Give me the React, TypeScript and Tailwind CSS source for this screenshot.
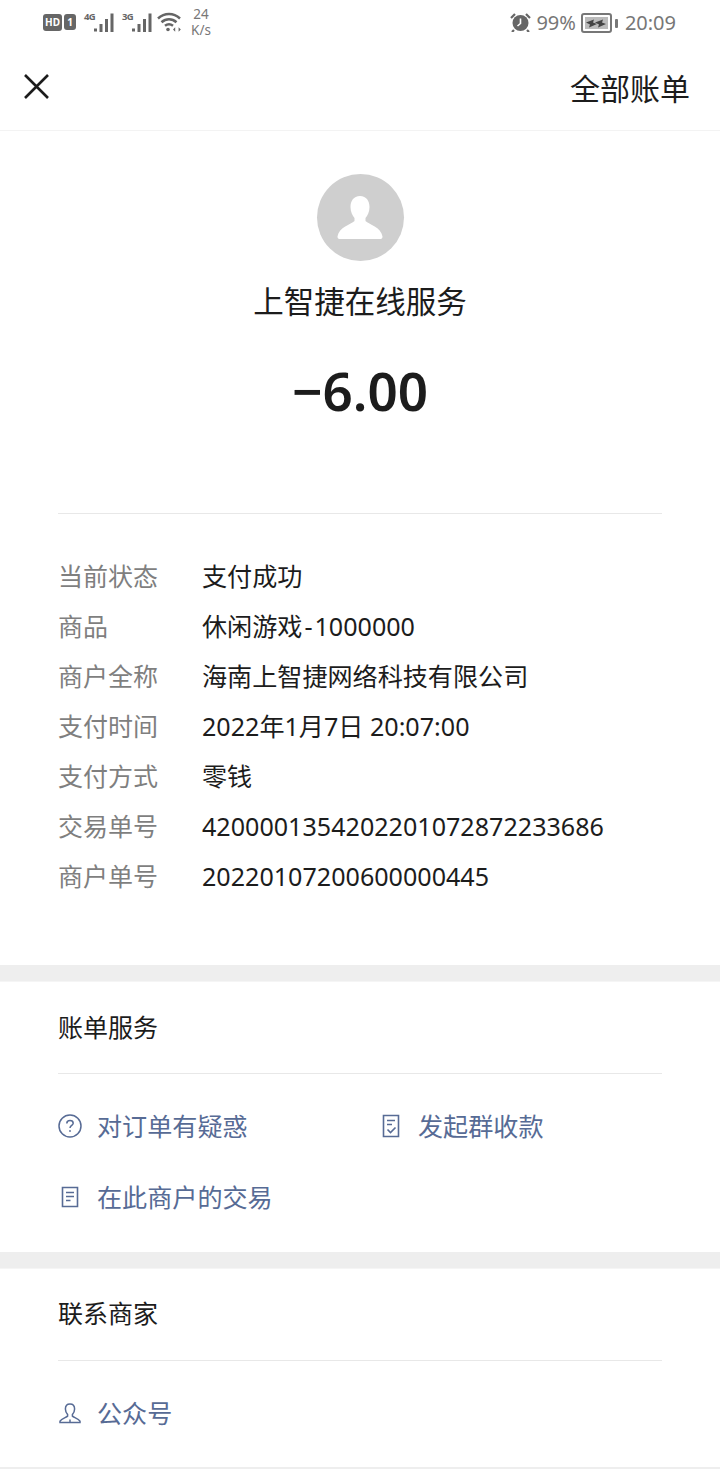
import type { ReactNode } from "react";

const font = { fontFamily: '"Noto Sans", "Noto Sans CJK SC", sans-serif' };

const details: [string, ReactNode][] = [
  ["当前状态", "支付成功"],
  ["商品", <>休闲游戏<span className="mx-[2px]">-</span>1000000</>],
  ["商户全称", "海南上智捷网络科技有限公司"],
  ["支付时间", "2022年1月7日 20:07:00"],
  ["支付方式", "零钱"],
  ["交易单号", "4200001354202201072872233686"],
  ["商户单号", "20220107200600000445"],
];

function Signal({ label }: { label: string }) {
  return (
    <div className="flex items-start w-[30px] h-[19px]">
      <span className="w-[10px] text-[9.5px] leading-[9px] font-bold text-[#666] tracking-[-0.8px] mt-[-1px]">{label}</span>
      <svg width="20" height="19" viewBox="0 0 20 19" fill="#666">
        <rect x="0" y="15.5" width="3" height="3" />
        <rect x="5.5" y="11" width="3" height="8" />
        <rect x="11" y="6" width="3" height="13" />
        <rect x="16.5" y="0.5" width="3" height="18.5" />
      </svg>
    </div>
  );
}

function StatusBar() {
  return (
    <div className="h-[44px] flex items-start justify-between pl-[43px] pr-[44px] pt-[12px] text-[#666]">
      <div className="flex items-center h-[20px]">
        <span className="w-[19px] h-[17px] rounded-[3px] bg-[#666] text-white text-[10px] leading-[17px] font-bold text-center">HD</span>
        <span className="ml-[2px] w-[12px] h-[16px] rounded-[3px] bg-[#666] text-white text-[10px] leading-[16px] font-bold text-center">1</span>
        <div className="ml-[8px] flex items-center gap-[8px]">
          <Signal label="4G" />
          <Signal label="3G" />
        </div>
        <svg className="ml-[5px]" width="24" height="20" viewBox="0 0 24 20" fill="none" stroke="#666" strokeWidth="2.5">
          <path d="M1 6.5C7.5 0.5 16.5 0.5 23 6.5" />
          <path d="M4.5 10.2C9 6.2 15 6.2 19.5 10.2" />
          <path d="M8 13.8C10.5 11.8 13.5 11.8 16 13.8" />
          <circle cx="11" cy="17.5" r="1.8" fill="#666" stroke="none" />
          <path d="M16 17.5l2.2-2.2v4.4zM23.8 17.5l-2.2-2.2v4.4z" fill="#666" stroke="none" />
        </svg>
        <div className="ml-[9px] w-[22px] h-[20px] flex flex-col justify-center items-center text-[13.5px] leading-[16px] text-[#777]">
          <div className="shrink-0">24</div>
          <div className="shrink-0">K/s</div>
        </div>
      </div>
      <div className="flex items-center h-[22px] text-[20px] leading-[20px] text-[#777]">
        <svg width="21" height="19" viewBox="0 0 21 19" className="mt-[-2px]">
          <circle cx="10.5" cy="10" r="8" fill="#666" />
          <path d="M10.5 5.5v5l-3 2.5" fill="none" stroke="#fff" strokeWidth="1.6" />
          <path d="M1 5l4-4M20 5l-4-4M4 17l-2 2M17 17l2 2" stroke="#666" strokeWidth="2.2" />
        </svg>
        <span className="ml-[5px]">99%</span>
        <div className="ml-[5px] w-[31px] h-[20px] rounded-[3px] border-2 border-[#777] p-[2px]">
          <div className="w-full h-full bg-[#bbb] flex items-center justify-center">
            <svg width="22" height="11" viewBox="0 0 22 10" fill="#444">
              <path d="M1 4L9 1 8 4 12 5.5 4 9 5 6z" />
              <path d="M10 4L18 1 17 4 21 5.5 13 9 14 6z" />
            </svg>
          </div>
        </div>
        <div className="ml-[3px] w-[3px] h-[9px] rounded-[1px] bg-[#777]" />
        <span className="ml-[7px]">20:09</span>
      </div>
    </div>
  );
}

function QuestionIcon() {
  return (
    <svg width="24" height="24" viewBox="0 0 24 24" fill="none" stroke="#576b95" strokeWidth="1.5">
      <circle cx="12" cy="12" r="11" />
      <path d="M8.8 9.5C8.8 7.6 10.2 6.6 12 6.6S15.2 7.7 15.2 9.3C15.2 11.3 12 11.6 12 14" />
      <circle cx="12" cy="17" r="0.9" fill="#576b95" stroke="none" />
    </svg>
  );
}

function BillCheckIcon() {
  return (
    <svg width="24" height="24" viewBox="0 0 24 24" fill="none" stroke="#576b95" strokeWidth="1.6">
      <path d="M4.5 1.5H19.5V22.5H4.5Z" />
      <path d="M8 6.5H16M8 10.5H13" />
      <path d="M8.5 15.5L11.5 18.5 16.5 13.5" />
    </svg>
  );
}

function BillIcon() {
  return (
    <svg width="24" height="24" viewBox="0 0 24 24" fill="none" stroke="#576b95" strokeWidth="1.6">
      <path d="M4.5 2.5H19.5V21.5H4.5Z" />
      <path d="M8 7.5H16M8 11.5H16M8 15.5H12.5" />
    </svg>
  );
}

function PersonIcon() {
  return (
    <svg width="24" height="24" viewBox="0 0 24 24" fill="none" stroke="#576b95" strokeWidth="1.5">
      <path d="M12 3C8.8 3 7.4 5.5 7.4 8C7.4 10.8 8.6 12.4 9.6 13.6V15.2C8 16.5 3.4 17.8 2 20.2V21.6H22V20.2C20.6 17.8 16 16.5 14.4 15.2V13.6C15.4 12.4 16.6 10.8 16.6 8C16.6 5.5 15.2 3 12 3Z" />
      <path d="M12 18.5V21.6" />
    </svg>
  );
}

function LinkItem({ icon, text, className }: { icon: ReactNode; text: string; className?: string }) {
  return (
    <div className={`flex items-center gap-[15px] h-[36px] ${className ?? ""}`}>
      {icon}
      <span className="text-[25.1px] leading-[36px] text-[#576b95]">{text}</span>
    </div>
  );
}

export default function App() {
  return (
    <div className="w-[720px] h-[1469px] bg-white overflow-hidden" style={font}>
      <StatusBar />

      <div className="h-[87px] flex items-center justify-between pl-[23px] pr-[30px] border-b border-[#f3f3f3]">
        <svg width="27" height="27" viewBox="0 0 27 27" stroke="#1c1c1c" strokeWidth="2.6" className="mt-[-1px]">
          <path d="M2 2L25 25M25 2L2 25" />
        </svg>
        <span className="text-[30px] leading-[40px] text-[#1c1c1c] mt-[3px]">全部账单</span>
      </div>

      <div className="flex flex-col items-center pt-[43px]">
        <div className="w-[87px] h-[87px] rounded-full bg-[#cfcfcf] flex items-center justify-center">
          <svg width="46" height="44" viewBox="0 0 46 44" fill="#fff">
            <path d="M23 0C16.5 0 13.5 5 13.5 11C13.5 16 15.5 19.5 17.5 22V25C14 28.5 2 31 0.5 40.5C0.5 42 1 43 2.5 43H43.5C45 43 45.5 42 45.5 40.5C44 31 32 28.5 28.5 25V22C30.5 19.5 32.5 16 32.5 11C32.5 5 29.5 0 23 0Z" />
          </svg>
        </div>
        <div className="mt-[18px] text-[30.5px] leading-[44px] text-[#1c1c1c]">上智捷在线服务</div>
        <div className="mt-[33px] text-[53px] leading-[70px] font-semibold text-[#1c1c1c]">−6.00</div>
      </div>

      <div className="mx-[58px] mt-[87px] border-t border-[#e8e8e8] pt-[38px]">
        {details.map(([label, value]) => (
          <div key={label} className="flex h-[50px] items-center text-[25.1px]">
            <span className="w-[144px] text-[25px] text-[#7f7f7f]">{label}</span>
            <span className="text-[#1c1c1c]">{value}</span>
          </div>
        ))}
      </div>

      <div className="mt-[63px] h-[17px] bg-[#eeeeee] border-b border-[#f5f5f5]" />

      <div className="px-[58px]">
        <div className="h-[92px] flex items-center border-b border-[#e8e8e8] text-[25px] text-[#1c1c1c]">账单服务</div>
        <div className="pt-[34px] flex flex-col gap-[35px]">
          <div className="flex">
            <LinkItem className="w-[321px]" icon={<QuestionIcon />} text="对订单有疑惑" />
            <LinkItem icon={<BillCheckIcon />} text="发起群收款" />
          </div>
          <LinkItem icon={<BillIcon />} text="在此商户的交易" />
        </div>
      </div>

      <div className="mt-[37px] h-[17px] bg-[#eeeeee] border-b border-[#f5f5f5]" />

      <div className="px-[58px]">
        <div className="h-[92px] pb-[2px] flex items-center border-b border-[#e8e8e8] text-[25px] text-[#1c1c1c]">联系商家</div>
        <div className="pt-[34px]">
          <LinkItem icon={<PersonIcon />} text="公众号" />
        </div>
      </div>

      <div className="mt-[36px] h-[2px] bg-[#eee]" />
    </div>
  );
}
